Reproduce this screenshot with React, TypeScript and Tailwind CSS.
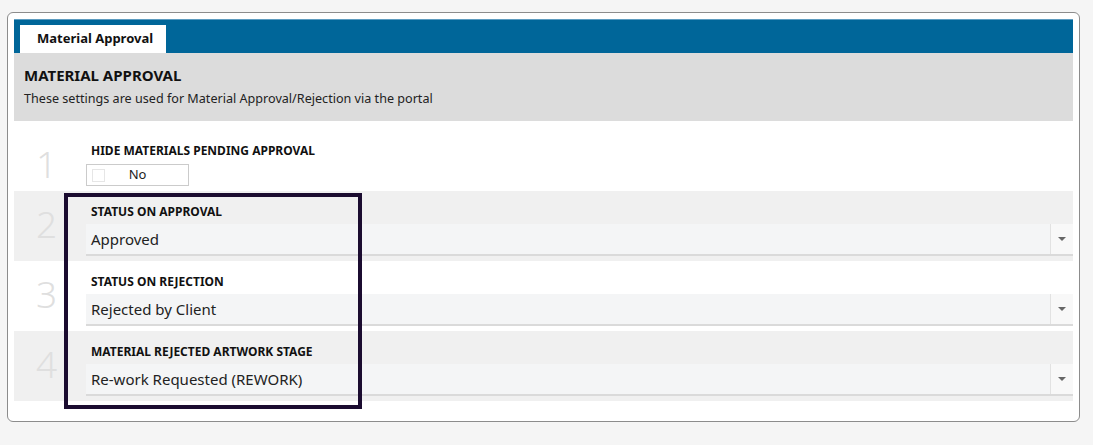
import { ReactNode } from "react"

const font = { fontFamily: '"Noto Sans", "Open Sans", sans-serif' }

function Select({ value }: { value: string }) {
    return (
        <div className="flex h-[32px] items-stretch border-b-2 border-[#dadada] bg-[#f4f5f6]">
            <div className="flex flex-1 items-center pl-[5px] text-[15px] text-[#222]">{value}</div>
            <div className="flex w-[23px] items-center justify-center border-l border-[#e2e2e2] bg-[#f8f8f8]">
                <div className="h-0 w-0 border-x-[4px] border-t-[4px] border-x-transparent border-t-[#666]" />
            </div>
        </div>
    )
}

function Row({ n, shaded, first, children }: { n: number; shaded?: boolean; first?: boolean; children: ReactNode }) {
    return (
        <div className={`flex h-[70px] ${shaded ? "bg-[#f0f0f0]" : "bg-white"} ${first ? "pt-[10px]" : ""}`}>
            <div className="w-[72px] pl-[22px] pt-[9px] text-[37px] leading-[48px] font-light text-[#dfdfdf]">{n}</div>
            <div className="flex-1">{children}</div>
        </div>
    )
}

function Label({ text }: { text: string }) {
    return <div className="pl-[5px] pt-[12px] text-[12px] leading-[17px] font-bold text-[#111]">{text}</div>
}

export default function App() {
    return (
        <div style={font} className="relative h-[445px] w-full bg-[#f5f5f5] pl-[7px] pt-[12px]">
            <div className="h-[410px] w-[1073px] rounded-[6px] border border-[#8c8c8c] bg-white p-[6px]">
                <div className="flex h-[34px] items-end border-t border-[#5d9cc0] bg-[#006699] pl-[6px]">
                    <div className="flex h-[28px] w-[146px] items-center bg-white pl-[17px] text-[13px] font-bold text-[#111]">
                        Material Approval
                    </div>
                </div>
                <div className="h-[68px] bg-[#dcdcdc] pl-[10px] pt-[12px]">
                    <div className="text-[15px] leading-[20px] font-bold text-[#111]">MATERIAL APPROVAL</div>
                    <div className="pt-[6px] text-[12.6px] leading-[16px] text-[#222]">
                        These settings are used for Material Approval/Rejection via the portal
                    </div>
                </div>
                <Row n={1} first>
                    <div className="pl-[5px] pt-[11px] text-[12px] leading-[17px] font-bold text-[#111]">
                        HIDE MATERIALS PENDING APPROVAL
                    </div>
                    <div className="mt-[5px] flex h-[22px] w-[103px] items-center border border-[#cbcbcb] bg-white pl-[5px]">
                        <div className="h-[13px] w-[13px] border border-[#e6e6e6]" />
                        <div className="flex-1 pr-[18px] text-center text-[13px] text-[#222]">No</div>
                    </div>
                </Row>
                <Row n={2} shaded>
                    <Label text="STATUS ON APPROVAL" />
                    <div className="pt-[4px]">
                        <Select value="Approved" />
                    </div>
                </Row>
                <Row n={3}>
                    <Label text="STATUS ON REJECTION" />
                    <div className="pt-[4px]">
                        <Select value="Rejected by Client" />
                    </div>
                </Row>
                <Row n={4} shaded>
                    <Label text="MATERIAL REJECTED ARTWORK STAGE" />
                    <div className="pt-[4px]">
                        <Select value="Re-work Requested (REWORK)" />
                    </div>
                </Row>
            </div>
            {/* annotation box drawn over the form */}
            <div className="absolute left-[64px] top-[193px] h-[216px] w-[298px] border-4 border-[#1b0c30]" />
        </div>
    )
}
